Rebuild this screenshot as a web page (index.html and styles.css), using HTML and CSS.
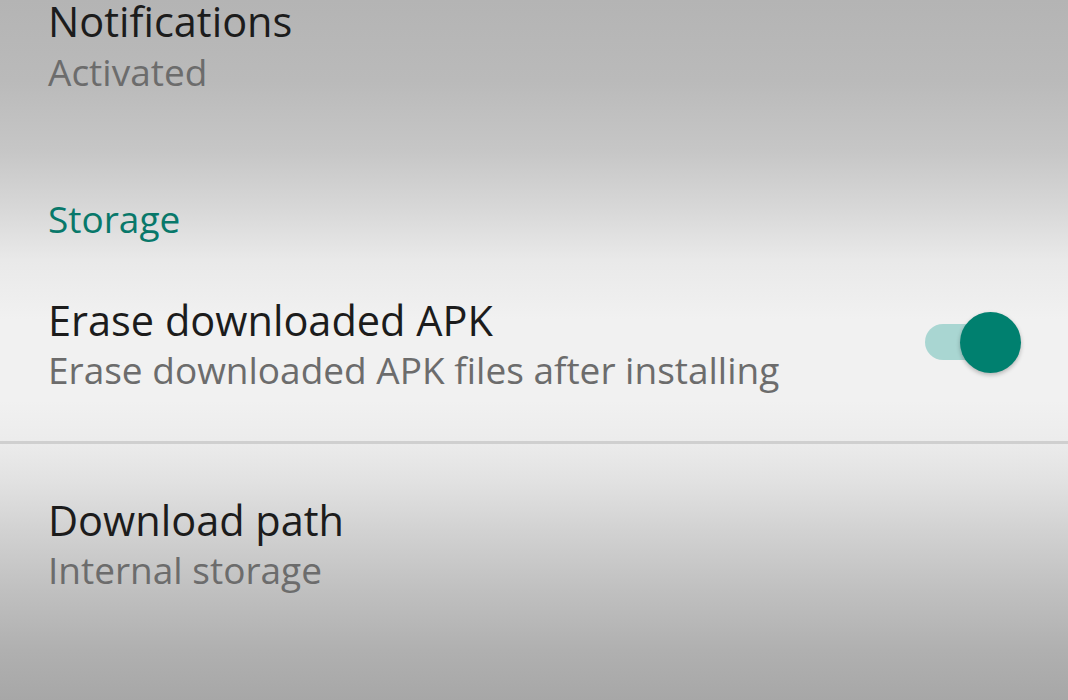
FILE: index.html
```html
<!DOCTYPE html>
<html lang="en">
<head>
<meta charset="utf-8">
<title>Settings</title>
<link rel="stylesheet" href="styles.css">
</head>
<body>
<div class="screen">
  <div class="pref pref-first">
    <div class="pref-text">
      <div class="pref-title">Notifications</div>
      <div class="pref-summary">Activated</div>
    </div>
  </div>

  <div class="category">Storage</div>

  <div class="pref pref-switch">
    <div class="pref-text">
      <div class="pref-title">Erase downloaded APK</div>
      <div class="pref-summary">Erase downloaded APK files after installing</div>
    </div>
    <div class="switch" role="switch" aria-checked="true">
      <span class="switch-track"></span>
      <span class="switch-thumb"></span>
    </div>
  </div>

  <div class="divider"></div>

  <div class="pref pref-path">
    <div class="pref-text">
      <div class="pref-title">Download path</div>
      <div class="pref-summary">Internal storage</div>
    </div>
  </div>
</div>
</body>
</html>
```

FILE: styles.css
```css
html, body {
  margin: 0;
  padding: 0;
}

body {
  width: 1068px;
  height: 700px;
  overflow: hidden;
  font-family: "Open Sans", "Noto Sans", sans-serif;
}

.screen {
  width: 1068px;
  height: 700px;
  display: flex;
  flex-direction: column;
  background: linear-gradient(to bottom,
    #b4b4b4 0px,
    #bababa 80px,
    #c6c6c6 150px,
    #d8d8d8 210px,
    #e9e9e9 260px,
    #f1f1f1 320px,
    #f1f1f1 400px,
    #ececec 440px,
    #e2e2e2 480px,
    #d2d2d2 530px,
    #c0c0c0 590px,
    #b0b0b0 650px,
    #a7a7a7 700px);
}

.pref {
  display: flex;
  align-items: center;
  padding: 0 47px 0 48px;
}

.pref-text {
  flex: 1;
  display: flex;
  flex-direction: column;
}

.pref-title {
  font-size: 41.5px;
  line-height: 50px;
  color: #1c1c1c;
}

.pref-summary {
  font-size: 37px;
  line-height: 50px;
  color: #6c6c6c;
}

.pref-first .pref-title {
  line-height: 42px;
}

.pref-first .pref-summary {
  margin-top: 5px;
}

.category {
  margin-top: 97px;
  padding-left: 48px;
  font-size: 37px;
  line-height: 50px;
  color: #08786a;
}

.pref-switch {
  margin-top: 51px;
}

.switch {
  position: relative;
  width: 96px;
  height: 62px;
  margin-top: -4px;
}

.switch-track {
  position: absolute;
  left: 0;
  top: 12px;
  width: 84px;
  height: 36px;
  border-radius: 18px;
  background: #a9d6d2;
}

.switch-thumb {
  position: absolute;
  right: 0;
  top: 0;
  width: 61px;
  height: 61px;
  border-radius: 50%;
  background: #00806f;
  box-shadow: 0 2px 4px rgba(0, 0, 0, 0.25);
}

.divider {
  margin-top: 46px;
  height: 3px;
  background: #cfcfcf;
}

.pref-path {
  margin-top: 51px;
}
```
